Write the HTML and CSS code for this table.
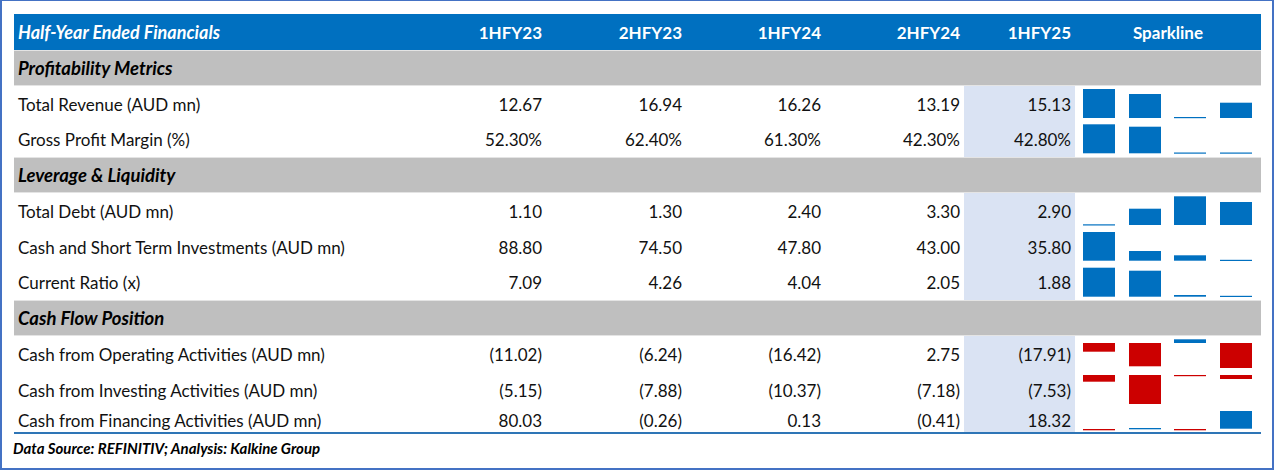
FILE: index.html
```html
<!DOCTYPE html>
<html>
<head>
<meta charset="utf-8">
<link rel="stylesheet" href="styles.css">
</head>
<body>
<div class="frame">
  <div class="table">
    <div class="row head">
      <div class="c label">Half-Year Ended Financials</div>
      <div class="c num">1HFY23</div>
      <div class="c num">2HFY23</div>
      <div class="c num">1HFY24</div>
      <div class="c num">2HFY24</div>
      <div class="c num">1HFY25</div>
      <div class="c spark-h">Sparkline</div>
    </div>
    <div class="section">Profitability Metrics</div>
    <div class="row h36">
      <div class="c label">Total Revenue (AUD mn)</div>
      <div class="c num">12.67</div>
      <div class="c num">16.94</div>
      <div class="c num">16.26</div>
      <div class="c num">13.19</div>
      <div class="c num hl">15.13</div>
      <div class="c spark"><svg width="186" height="36" viewBox="0 0 186 36"><rect class="b" x="8" y="3" width="32" height="29"/><rect class="b" x="54" y="8" width="32" height="24"/><rect class="b" x="99" y="31" width="32" height="1.2"/><rect class="b" x="145" y="16.7" width="32" height="15.3"/></svg></div>
    </div>
    <div class="row h35">
      <div class="c label">Gross Profit Margin (%)</div>
      <div class="c num">52.30%</div>
      <div class="c num">62.40%</div>
      <div class="c num">61.30%</div>
      <div class="c num">42.30%</div>
      <div class="c num hl">42.80%</div>
      <div class="c spark"><svg width="186" height="35" viewBox="0 0 186 35"><rect class="b" x="8" y="2.3" width="32" height="29"/><rect class="b" x="54" y="4.7" width="32" height="26.6"/><rect class="b" x="99" y="30.5" width="32" height="1.2"/><rect class="b" x="145" y="30.5" width="32" height="1.2"/></svg></div>
    </div>
    <div class="section">Leverage &amp; Liquidity</div>
    <div class="row h36">
      <div class="c label">Total Debt (AUD mn)</div>
      <div class="c num">1.10</div>
      <div class="c num">1.30</div>
      <div class="c num">2.40</div>
      <div class="c num">3.30</div>
      <div class="c num hl">2.90</div>
      <div class="c spark"><svg width="186" height="36" viewBox="0 0 186 36"><rect class="b" x="8" y="31.3" width="32" height="1.2"/><rect class="b" x="54" y="15.7" width="32" height="16.3"/><rect class="b" x="99" y="3.3" width="32" height="28.7"/><rect class="b" x="145" y="9" width="32" height="23"/></svg></div>
    </div>
    <div class="row h36">
      <div class="c label">Cash and Short Term Investments (AUD mn)</div>
      <div class="c num">88.80</div>
      <div class="c num">74.50</div>
      <div class="c num">47.80</div>
      <div class="c num">43.00</div>
      <div class="c num hl">35.80</div>
      <div class="c spark"><svg width="186" height="36" viewBox="0 0 186 36"><rect class="b" x="8" y="3" width="32" height="28.7"/><rect class="b" x="54" y="22" width="32" height="9.7"/><rect class="b" x="99" y="26.3" width="32" height="5.4"/><rect class="b" x="145" y="30.8" width="32" height="1.2"/></svg></div>
    </div>
    <div class="row h35">
      <div class="c label">Current Ratio (x)</div>
      <div class="c num">7.09</div>
      <div class="c num">4.26</div>
      <div class="c num">4.04</div>
      <div class="c num">2.05</div>
      <div class="c num hl">1.88</div>
      <div class="c spark"><svg width="186" height="35" viewBox="0 0 186 35"><rect class="b" x="8" y="2.7" width="32" height="29"/><rect class="b" x="54" y="5.7" width="32" height="26"/><rect class="b" x="99" y="30" width="32" height="1.7"/><rect class="b" x="145" y="30.8" width="32" height="1.2"/></svg></div>
    </div>
    <div class="section">Cash Flow Position</div>
    <div class="row h36">
      <div class="c label">Cash from Operating Activities (AUD mn)</div>
      <div class="c num">(11.02)</div>
      <div class="c num">(6.24)</div>
      <div class="c num">(16.42)</div>
      <div class="c num">2.75</div>
      <div class="c num hl">(17.91)</div>
      <div class="c spark"><svg width="186" height="36" viewBox="0 0 186 36"><rect class="r" x="8" y="7" width="32" height="8.7"/><rect class="r" x="54" y="7" width="32" height="23.3"/><rect class="b" x="99" y="3.3" width="32" height="3.7"/><rect class="r" x="145" y="7" width="32" height="25"/></svg></div>
    </div>
    <div class="row h37">
      <div class="c label">Cash from Investing Activities (AUD mn)</div>
      <div class="c num">(5.15)</div>
      <div class="c num">(7.88)</div>
      <div class="c num">(10.37)</div>
      <div class="c num">(7.18)</div>
      <div class="c num hl">(7.53)</div>
      <div class="c spark"><svg width="186" height="37" viewBox="0 0 186 37"><rect class="r" x="8" y="3" width="32" height="6.7"/><rect class="r" x="54" y="3" width="32" height="29"/><rect class="r" x="99" y="3" width="32" height="1.2"/><rect class="r" x="145" y="3" width="32" height="4"/></svg></div>
    </div>
    <div class="row h23">
      <div class="c label">Cash from Financing Activities (AUD mn)</div>
      <div class="c num">80.03</div>
      <div class="c num">(0.26)</div>
      <div class="c num">0.13</div>
      <div class="c num">(0.41)</div>
      <div class="c num hl">18.32</div>
      <div class="c spark"><svg width="186" height="23" viewBox="0 0 186 23"><rect class="r" x="8" y="20" width="32" height="1.3"/><rect class="b" x="54" y="19" width="32" height="1.3"/><rect class="r" x="99" y="20" width="32" height="1.3"/><rect class="b" x="145" y="2" width="32" height="17.7"/></svg></div>
    </div>
  </div>
  <div class="footer">Data Source: REFINITIV; Analysis: Kalkine Group</div>
</div>
</body>
</html>
```

FILE: styles.css
```css
html, body {
  margin: 0;
  padding: 0;
  background: #ffffff;
}

.frame {
  box-sizing: border-box;
  width: 1274px;
  height: 470px;
  border-style: solid;
  border-color: #4472c4;
  border-width: 1px 2px 2px 2px;
  padding: 13px 0 0 12px;
  font-family: Lato, "Liberation Sans", sans-serif;
  font-size: 17px;
  color: #111111;
}

.table {
  width: 1247px;
  border-bottom: 2px solid #2e75b6;
}

.row {
  display: grid;
  grid-template-columns: 393px 139px 140px 139px 139px 111px 186px;
  align-items: stretch;
}

.c {
  display: flex;
  align-items: center;
  white-space: nowrap;
}

.label {
  padding-left: 4px;
}

.num {
  justify-content: flex-end;
  padding-right: 4px;
}

.hl {
  background: #dae3f3;
}

.spark {
  align-items: stretch;
}

.spark svg {
  display: block;
}

.spark .b {
  fill: #0070c0;
}

.spark .r {
  fill: #cc0000;
}

.head {
  height: 36px;
  background: #0070c0;
  color: #ffffff;
  font-weight: 700;
}

.head .label {
  font-style: italic;
  font-size: 18px;
}

.spark-h {
  justify-content: center;
}

.section {
  box-sizing: border-box;
  height: 36px;
  background: #bfbfbf;
  border-top: 1px solid #e4e4e4;
  border-bottom: 1px solid #e4e4e4;
  display: flex;
  align-items: center;
  padding-left: 4px;
  font-size: 18.5px;
  font-weight: 700;
  font-style: italic;
  color: #000000;
}

.h36 { height: 36px; }
.h35 { height: 35px; }
.h37 { height: 37px; }
.h23 { height: 23px; }

.footer {
  margin-left: -1px;
  padding-top: 4px;
  line-height: 20px;
  font-size: 15px;
  font-weight: 700;
  font-style: italic;
  color: #000000;
}
```
